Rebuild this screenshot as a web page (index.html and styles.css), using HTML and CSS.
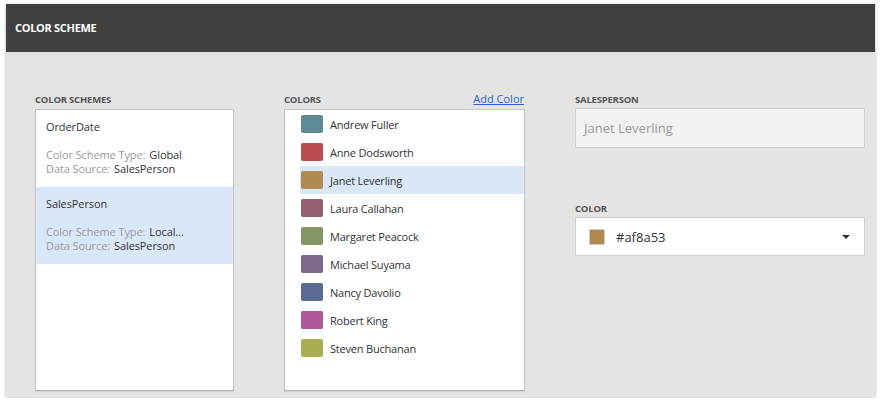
FILE: index.html
```html
<!DOCTYPE html>
<html>
<head>
<meta charset="utf-8">
<link rel="stylesheet" href="styles.css">
</head>
<body>
<div class="panel">
  <div class="header">COLOR SCHEME</div>
  <div class="content">
    <div class="col col-schemes">
      <div class="label-row"><span class="label">COLOR SCHEMES</span></div>
      <div class="box">
        <div class="scheme">
          <div class="scheme-name">OrderDate</div>
          <div class="scheme-detail"><span class="dlabel">Color Scheme Type:</span><span class="dvalue">Global</span></div>
          <div class="scheme-detail"><span class="dlabel">Data Source:</span><span class="dvalue">SalesPerson</span></div>
        </div>
        <div class="scheme selected">
          <div class="scheme-name">SalesPerson</div>
          <div class="scheme-detail"><span class="dlabel">Color Scheme Type:</span><span class="dvalue">Local...</span></div>
          <div class="scheme-detail"><span class="dlabel">Data Source:</span><span class="dvalue">SalesPerson</span></div>
        </div>
      </div>
    </div>
    <div class="col col-colors">
      <div class="label-row"><span class="label">COLORS</span><a class="add-link">Add Color</a></div>
      <div class="box colors-box">
        <div class="color-row"><span class="swatch" style="background:#5f8b95"></span><span>Andrew Fuller</span></div>
        <div class="color-row"><span class="swatch" style="background:#ba4d51"></span><span>Anne Dodsworth</span></div>
        <div class="color-row selected"><span class="swatch" style="background:#af8a53"></span><span>Janet Leverling</span></div>
        <div class="color-row"><span class="swatch" style="background:#955f71"></span><span>Laura Callahan</span></div>
        <div class="color-row"><span class="swatch" style="background:#859666"></span><span>Margaret Peacock</span></div>
        <div class="color-row"><span class="swatch" style="background:#7e688c"></span><span>Michael Suyama</span></div>
        <div class="color-row"><span class="swatch" style="background:#5d6b94"></span><span>Nancy Davolio</span></div>
        <div class="color-row"><span class="swatch" style="background:#ad569a"></span><span>Robert King</span></div>
        <div class="color-row"><span class="swatch" style="background:#a8af55"></span><span>Steven Buchanan</span></div>
      </div>
    </div>
    <div class="col col-edit">
      <div class="label-row"><span class="label">SALESPERSON</span></div>
      <div class="input readonly">Janet Leverling</div>
      <div class="label-row color-label"><span class="label">COLOR</span></div>
      <div class="input select">
        <span class="sel-swatch"></span>
        <span class="sel-text">#af8a53</span>
        <span class="arrow"></span>
      </div>
    </div>
  </div>
</div>
</body>
</html>
```
FILE: styles.css
```css
html, body {
  margin: 0;
  padding: 0;
  background: #ffffff;
}
body {
  font-family: "Open Sans", "Noto Sans", sans-serif;
  color: #333333;
  padding: 4px 6px 0 6px;
}
.panel {
  width: 869px;
  height: 394px;
  background: #e4e4e4;
  box-shadow: 0 1px 3px rgba(0, 0, 0, 0.3);
  display: flex;
  flex-direction: column;
}
.header {
  height: 48px;
  background: #404040;
  color: #ffffff;
  font-weight: 700;
  font-size: 11px;
  letter-spacing: -0.3px;
  line-height: 48px;
  padding-left: 9px;
  flex: none;
}
.content {
  display: grid;
  grid-template-columns: 199px 241px 290px;
  column-gap: 50px;
  padding: 40px 0 0 29px;
}
.col {
  display: flex;
  flex-direction: column;
}
.label-row {
  display: flex;
  justify-content: space-between;
  align-items: center;
  height: 14px;
  margin-bottom: 3px;
}
.label {
  font-size: 9.5px;
  font-weight: 700;
  color: #555555;
  letter-spacing: -0.2px;
}
.add-link {
  font-size: 11px;
  color: #2f63c9;
  text-decoration: underline;
  margin-right: 1px;
  margin-top: -2px;
}
.box {
  height: 282px;
  box-sizing: border-box;
  background: #ffffff;
  border: 1px solid #c4c4c4;
  border-bottom-color: #b4b4b4;
  box-shadow: 0 1px 1px rgba(0, 0, 0, 0.08);
}
.scheme {
  height: 77px;
  box-sizing: border-box;
  padding: 9px 10px 0 10px;
  font-size: 11px;
  letter-spacing: -0.1px;
}
.scheme.selected {
  background: #dae7f8;
}
.scheme-name {
  line-height: 16px;
  height: 16px;
  margin-bottom: 13px;
  color: #333333;
}
.scheme-detail {
  line-height: 14px;
  height: 14px;
  white-space: nowrap;
}
.dlabel {
  color: #9a9a9a;
  margin-right: 4px;
}
.dvalue {
  color: #333333;
}
.colors-box {
  padding: 0 0 0 15px;
}
.color-row {
  height: 28px;
  display: flex;
  align-items: center;
  font-size: 11px;
  letter-spacing: -0.2px;
  color: #333333;
}
.color-row.selected {
  background: #dae7f8;
}
.swatch {
  width: 22px;
  height: 18px;
  border-radius: 2px;
  margin-left: 1px;
  margin-right: 7px;
  flex: none;
}
.input {
  height: 40px;
  box-sizing: border-box;
  border: 1px solid #cfcfcf;
  display: flex;
  align-items: center;
  font-size: 13px;
}
.readonly {
  background: #f2f2f2;
  color: #9a9a9a;
  padding-left: 8px;
  margin-top: -1px;
}
.color-label {
  margin-top: 53px;
}
.select {
  background: #ffffff;
  padding-left: 13px;
  padding-right: 14px;
  height: 39px;
  margin-top: -1px;
}
.sel-swatch {
  width: 14px;
  height: 14px;
  background: #af8a53;
  border: 1px solid #d8cdbd;
  flex: none;
}
.sel-text {
  margin-left: 11px;
  flex: 1;
  color: #333333;
}
.arrow {
  width: 0;
  height: 0;
  border-left: 4px solid transparent;
  border-right: 4px solid transparent;
  border-top: 4px solid #333333;
}
```
